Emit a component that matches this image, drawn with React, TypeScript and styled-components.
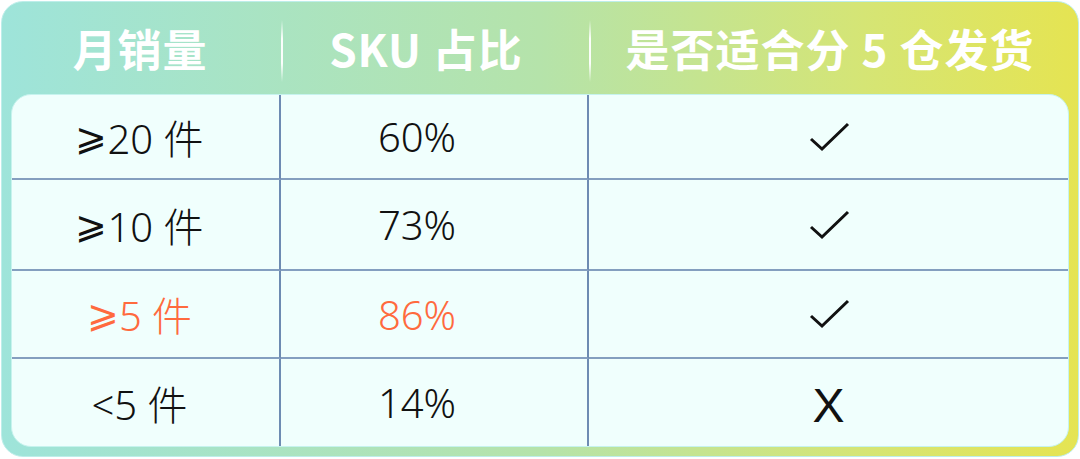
import React from 'react';
import styled, { createGlobalStyle } from 'styled-components';

const GlobalStyle = createGlobalStyle`
  html, body {
    margin: 0;
    padding: 0;
    background: #ffffff;
  }
  body {
    font-family: "Noto Sans", "Noto Sans CJK SC", sans-serif;
  }
`;

const Card = styled.section`
  box-sizing: border-box;
  width: 1078px;
  height: 456px;
  margin: 1px;
  border-radius: 22px;
  border: 1px solid #bdeeea;
  background: linear-gradient(90deg, #9ee4da 0%, #b5e3aa 50%, #d5e575 80%, #e5e452 100%);
  padding: 0 9px 9px;
  display: flex;
  flex-direction: column;
`;

const Header = styled.div`
  height: 92px;
  display: flex;
  align-items: center;
`;

const HeadCell = styled.div<{ $w?: number; $shift?: number }>`
  ${(p) => (p.$w ? `width: ${p.$w}px;` : 'flex: 1;')}
  text-align: center;
  color: #ffffff;
  font-family: "Noto Sans CJK SC", "Noto Sans", sans-serif;
  font-weight: 600;
  font-size: 44px;
  letter-spacing: 1px;
  padding-right: ${(p) => p.$shift ?? 0}px;
  box-sizing: border-box;
  white-space: nowrap;
`;

const HeadDivider = styled.div`
  width: 2px;
  height: 62px;
  margin-top: 6px;
  flex-shrink: 0;
  background: linear-gradient(
    180deg,
    rgba(255, 255, 255, 0) 0%,
    rgba(255, 255, 255, 0.95) 30%,
    rgba(255, 255, 255, 0.95) 70%,
    rgba(255, 255, 255, 0) 100%
  );
`;

const Table = styled.div`
  flex: 1;
  border-radius: 20px;
  background: #f0fffd;
  border: 1px solid #c6f3ee;
  display: grid;
  grid-template-columns: 269px 308px 1fr;
  grid-template-rows: 85px 91px 88px 1fr;
  overflow: hidden;
`;

const Cell = styled.div<{ $lastCol?: boolean; $lastRow?: boolean; $hot?: boolean; $shift?: number }>`
  display: flex;
  align-items: center;
  justify-content: center;
  padding-right: ${(p) => p.$shift ?? 0}px;
  border-right: ${(p) => (p.$lastCol ? 'none' : '2px solid rgba(60, 95, 150, 0.72)')};
  border-bottom: ${(p) => (p.$lastRow ? 'none' : '2px solid rgba(60, 95, 150, 0.6)')};
  color: ${(p) => (p.$hot ? '#ff6a3e' : '#111111')};
  font-family: "Noto Sans", "Noto Sans CJK SC", sans-serif;
  font-weight: 300;
  font-size: 40px;
  white-space: pre;
`;

const Sym = styled.span`
  font-family: "DejaVu Sans", sans-serif;
  font-weight: 200;
  font-size: 38px;
`;

const Cross = styled.span`
  font-family: "Liberation Sans", Arial, sans-serif;
  font-size: 48px;
  line-height: 1;
  margin-top: 6px;
  color: #111111;
`;

const Check = () => (
  <svg width="42" height="32" viewBox="0 0 42 32" fill="none">
    <path d="M3 18 L14 28 L40 3" stroke="#111" strokeWidth="3" strokeLinejoin="miter" />
  </svg>
);

const rows = [
  { sym: '⩾', sales: '20 件', share: '60%', ok: true },
  { sym: '⩾', sales: '10 件', share: '73%', ok: true },
  { sym: '⩾', sales: '5 件', share: '86%', ok: true, hot: true },
  { sym: '<', sales: '5 件', share: '14%', ok: false },
];

const App: React.FC = () => {
  return (
    <>
      <GlobalStyle />
      <Card>
        <Header>
          <HeadCell $w={270} $shift={12}>月销量</HeadCell>
          <HeadDivider />
          <HeadCell $w={306} $shift={20}>SKU 占比</HeadCell>
          <HeadDivider />
          <HeadCell $shift={0}>是否适合分 5 仓发货</HeadCell>
        </Header>
        <Table>
          {rows.map((r, i) => {
            const last = i === rows.length - 1;
            return (
              <React.Fragment key={r.share}>
                <Cell $lastRow={last} $hot={r.hot} $shift={12}>
                  {r.sym === '⩾' ? <Sym>{r.sym}</Sym> : r.sym}
                  {r.sales}
                </Cell>
                <Cell $lastRow={last} $hot={r.hot} $shift={34}>{r.share}</Cell>
                <Cell $lastRow={last} $lastCol $shift={0}>
                  {r.ok ? <Check /> : <Cross>X</Cross>}
                </Cell>
              </React.Fragment>
            );
          })}
        </Table>
      </Card>
    </>
  );
};

export default App;
